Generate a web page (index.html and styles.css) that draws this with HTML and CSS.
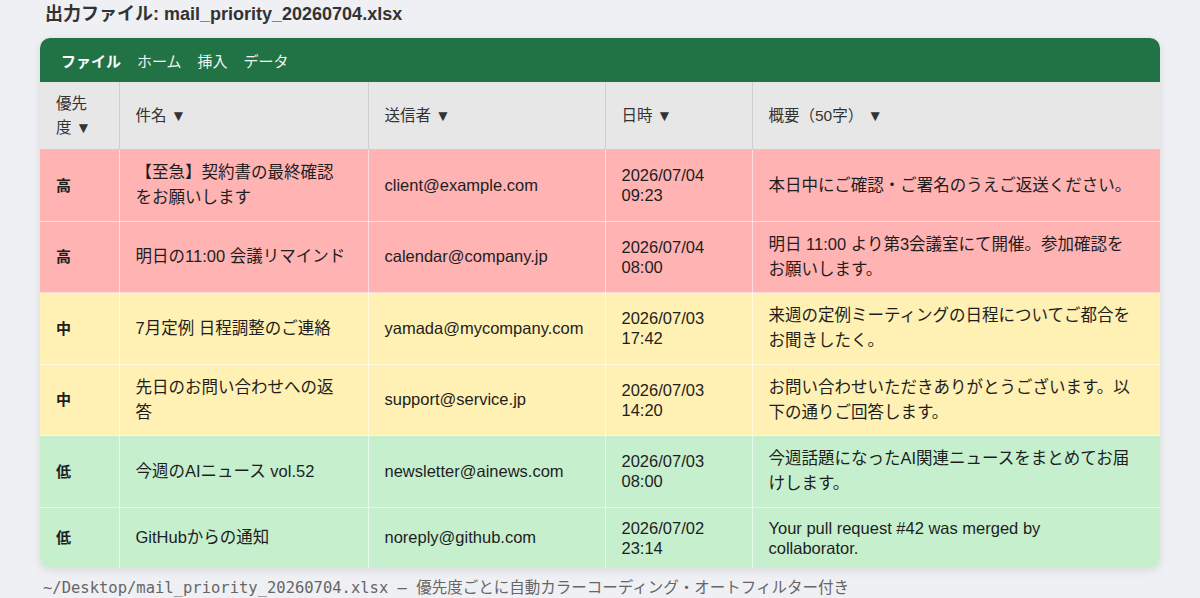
FILE: index.html
```html
<!DOCTYPE html>
<html lang="ja">
<head>
<meta charset="utf-8">
<title>mail_priority</title>
<link rel="stylesheet" href="styles.css">
</head>
<body>
<div class="page">
  <h1 class="title">出力ファイル: mail_priority_20260704.xlsx</h1>
  <div class="card">
    <div class="ribbon">
      <span class="tab active">ファイル</span>
      <span class="tab">ホーム</span>
      <span class="tab">挿入</span>
      <span class="tab">データ</span>
    </div>
    <table class="sheet">
      <colgroup>
        <col class="c-pri"><col class="c-sub"><col class="c-from"><col class="c-date"><col class="c-sum">
      </colgroup>
      <thead>
        <tr>
          <th>優先<br>度 ▼</th>
          <th>件名 ▼</th>
          <th>送信者 ▼</th>
          <th>日時 ▼</th>
          <th>概要（50字） ▼</th>
        </tr>
      </thead>
      <tbody>
        <tr class="high">
          <td class="pri">高</td>
          <td class="sub">【至急】契約書の最終確認をお願いします</td>
          <td>client@example.com</td>
          <td class="dt">2026/07/04 09:23</td>
          <td class="sum">本日中にご確認・ご署名のうえご返送ください。</td>
        </tr>
        <tr class="high">
          <td class="pri">高</td>
          <td class="sub">明日の11:00 会議リマインド</td>
          <td>calendar@company.jp</td>
          <td class="dt">2026/07/04 08:00</td>
          <td class="sum">明日 11:00 より第3会議室にて開催。参加確認をお願いします。</td>
        </tr>
        <tr class="mid">
          <td class="pri">中</td>
          <td class="sub">7月定例 日程調整のご連絡</td>
          <td>yamada@mycompany.com</td>
          <td class="dt">2026/07/03 17:42</td>
          <td class="sum">来週の定例ミーティングの日程についてご都合をお聞きしたく。</td>
        </tr>
        <tr class="mid">
          <td class="pri">中</td>
          <td class="sub">先日のお問い合わせへの返答</td>
          <td>support@service.jp</td>
          <td class="dt">2026/07/03 14:20</td>
          <td class="sum">お問い合わせいただきありがとうございます。以下の通りご回答します。</td>
        </tr>
        <tr class="low">
          <td class="pri">低</td>
          <td class="sub">今週のAIニュース vol.52</td>
          <td>newsletter@ainews.com</td>
          <td class="dt">2026/07/03 08:00</td>
          <td class="sum">今週話題になったAI関連ニュースをまとめてお届けします。</td>
        </tr>
        <tr class="low last">
          <td class="pri">低</td>
          <td class="sub">GitHubからの通知</td>
          <td>noreply@github.com</td>
          <td class="dt">2026/07/02 23:14</td>
          <td class="sum en">Your pull request #42 was merged by collaborator.</td>
        </tr>
      </tbody>
    </table>
  </div>
  <p class="caption"><span class="mono">~/Desktop/mail_priority_20260704.xlsx — </span>優先度ごとに自動カラーコーディング・オートフィルター付き</p>
</div>
</body>
</html>
```

FILE: styles.css
```css
html, body {
  margin: 0;
  padding: 0;
  background: #eff0f4;
}

body {
  font-family: "Liberation Sans", "Noto Sans CJK JP", sans-serif;
  color: #1e1e1e;
}

.page {
  padding: 2px 40px 0 40px;
}

.title {
  margin: 0 0 12px 5px;
  font-size: 18px;
  line-height: 24px;
  font-weight: 700;
  color: #333;
}

.card {
  background: #ffffff;
  border-radius: 10px;
  overflow: hidden;
  box-shadow: 0 2px 10px rgba(0, 0, 0, 0.10);
}

.ribbon {
  height: 44px;
  background: #217346;
  display: flex;
  align-items: center;
  gap: 16px;
  padding-left: 21px;
  font-size: 15px;
  color: #eef6f0;
}

.tab.active {
  font-weight: 700;
  color: #ffffff;
}

.sheet {
  width: 100%;
  border-collapse: collapse;
  table-layout: fixed;
}

.c-pri { width: 79px; }
.c-sub { width: 249px; }
.c-from { width: 237px; }
.c-date { width: 147px; }
.c-sum { width: 408px; }

.sheet th {
  background: #e7e7e7;
  text-align: left;
  font-weight: 400;
  font-size: 15.5px;
  line-height: 24px;
  color: #333;
  padding: 9.5px 16px;
  border-right: 1px solid #cfcfcf;
  border-bottom: 1px solid #cfcfcf;
}

.sheet th:last-child {
  border-right: 1px solid #d0d0d0;
}

.sheet td {
  font-size: 16.5px;
  line-height: 25.25px;
  padding: 10px 16px;
  vertical-align: middle;
  border-right: 1px solid rgba(255, 255, 255, 0.55);
  border-bottom: 1px solid rgba(255, 255, 255, 0.55);
}

.sheet td:last-child {
  border-right: none;
}

.sheet tr.last td {
  border-bottom: none;
}

.sheet td.pri {
  font-size: 15px;
  font-weight: 700;
}

.sheet td.sub {
  padding-right: 20px;
}

.sheet td.dt,
.sheet td.en {
  line-height: 20px;
}

.sheet td.sum {
  padding-right: 20px;
}

.sheet td.sum.en {
  padding-right: 60px;
}

tr.high td { background: #ffb3b3; }
tr.mid td { background: #fff0b3; }
tr.low td { background: #c6efce; }

.caption {
  margin: 10px 0 0 3px;
  font-size: 15.5px;
  line-height: 20px;
  color: #666;
}

.mono {
  font-family: "DejaVu Sans Mono", "Liberation Mono", monospace;
  white-space: pre;
}
```
